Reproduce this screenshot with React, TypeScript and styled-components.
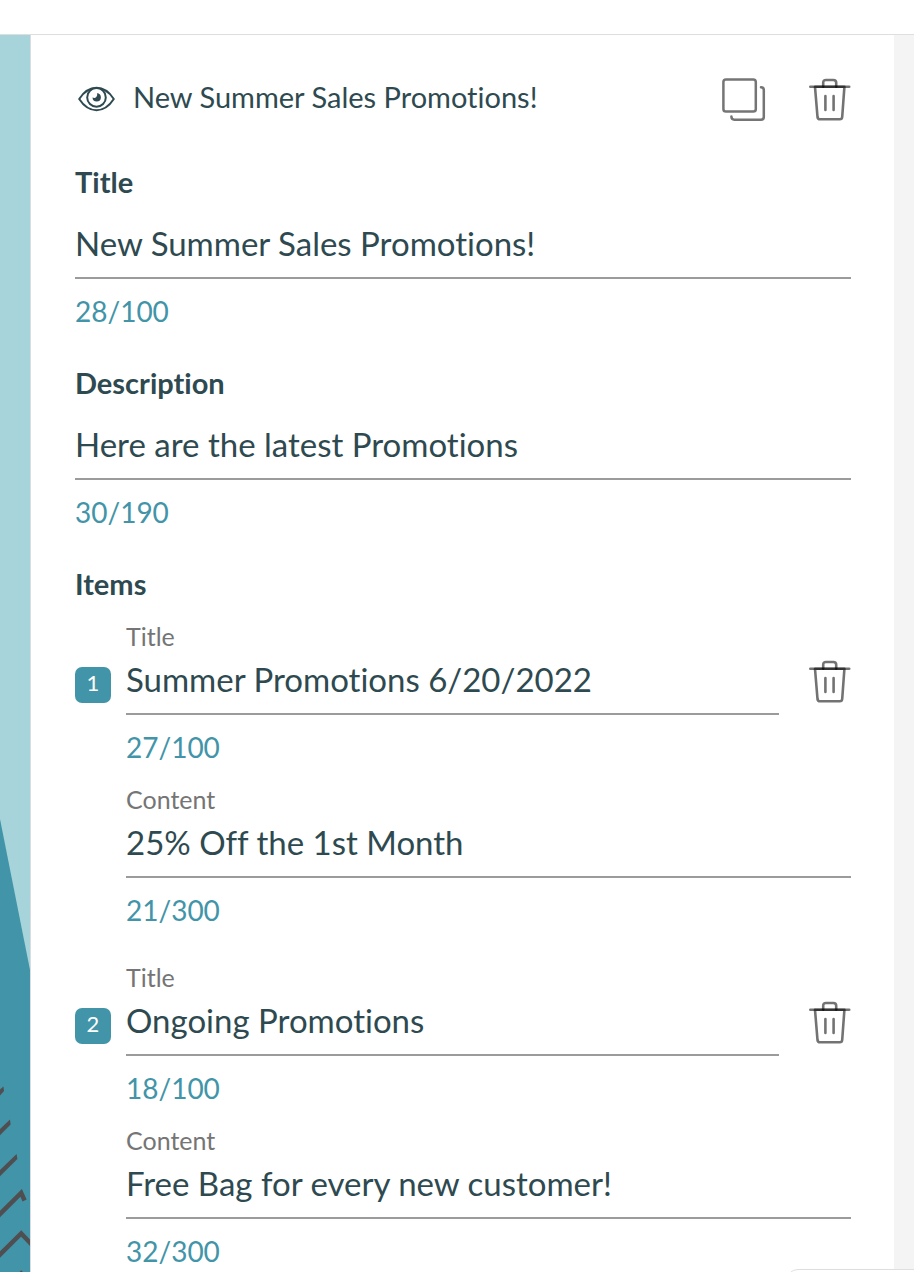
import React, { useId, useState } from "react";
import styled, { createGlobalStyle } from "styled-components";

const GlobalStyle = createGlobalStyle`
  * { box-sizing: border-box; }
  body {
    margin: 0;
    background: #fff;
    color: #2e4a50;
    font-family: "Lato", "Open Sans", sans-serif;
    font-variant-ligatures: no-common-ligatures;
  }
`;

const Page = styled.div`
  display: flex;
  flex-direction: column;
  min-height: 100vh;
`;

const TopBar = styled.header`
  height: 35px;
  border-bottom: 1px solid #dedede;
`;

const Workspace = styled.div`
  flex: 1;
  display: grid;
  grid-template-columns: 31px 1fr 20px;
`;

const Backdrop = styled.aside`
  position: relative;
  overflow: hidden;
  background: #a7d4da;
  border-right: 1px solid #dcdcdf;
`;

const Scenery = styled.svg`
  position: absolute;
  left: 0;
  bottom: 0;
  display: block;
`;

const Gutter = styled.div`
  background: #f4f4f4;
`;

const Editor = styled.main`
  padding: 43px 43px 0 44px;
`;

const CardHeader = styled.div`
  display: flex;
  align-items: center;
  height: 44px;
  margin-bottom: 43px;
`;

const CardName = styled.h1`
  flex: 1;
  display: flex;
  align-items: center;
  gap: 18px;
  margin: 0;
  padding: 0 0 6px 3px;
  font-size: 29px;
  font-weight: 400;
  line-height: 38px;

  svg {
    margin-top: 4px;
  }
`;

const Actions = styled.div`
  display: flex;
  gap: 43px;
`;

const IconButton = styled.button<{ $width?: number; $top?: number }>`
  flex: none;
  width: ${(p) => p.$width ?? 42}px;
  height: 44px;
  margin: ${(p) => p.$top ?? 0}px 0 0;
  padding: 0;
  border: 0;
  background: none;
  cursor: pointer;

  svg {
    display: block;
  }
`;

const Section = styled.section`
  display: flex;
  flex-direction: column;
  margin-bottom: 36px;
`;

const Heading = styled.label`
  margin-bottom: 16px;
  font-size: 29px;
  font-weight: 700;
  line-height: 34px;
`;

const ItemsHeading = styled.h2`
  margin: 0 0 20px;
  font-size: 29px;
  font-weight: 700;
  line-height: 34px;
`;

const SubLabel = styled.label`
  color: #757575;
  font-size: 25px;
  line-height: 30px;
`;

const TextBox = styled.input`
  width: 100%;
  height: 64px;
  padding: 0 0 6px;
  border: 0;
  border-bottom: 2px solid #9b9b9b;
  border-radius: 0;
  outline: 0;
  background: none;
  color: inherit;
  font: inherit;
  font-size: 33px;
  font-variant-ligatures: no-common-ligatures;
`;

const Counter = styled.output`
  display: block;
  margin-top: 13px;
  color: #4294a8;
  font-size: 28px;
  line-height: 38px;
`;

const ItemList = styled.ol`
  display: flex;
  flex-direction: column;
  gap: 33px;
  margin: 0;
  padding: 0;
  list-style: none;
`;

const ItemRow = styled.li`
  display: flex;
  gap: 15px;
`;

const Badge = styled.span`
  flex: none;
  width: 36px;
  height: 36px;
  margin-top: 46px;
  border-radius: 7px;
  background: #4294a8;
  color: #fff;
  font-size: 22px;
  line-height: 32px;
  text-align: center;
`;

const ItemBody = styled.div`
  flex: 1;
  display: flex;
  flex-direction: column;
  gap: 18px;
  min-width: 0;
`;

const TitleRow = styled.div`
  display: flex;
  gap: 30px;
`;

const ItemField = styled.div`
  flex: 1;
  display: flex;
  flex-direction: column;
  min-width: 0;
`;

const FloatingPanel = styled.div`
  position: fixed;
  right: -12px;
  bottom: -37px;
  width: 140px;
  height: 40px;
  border: 1px solid #dedede;
  border-radius: 12px;
  background: #fff;
`;

const TrashIcon = () => (
  <svg width="42" height="44" viewBox="0 0 42 44" fill="none" stroke="#000" strokeOpacity="0.55" strokeWidth="2.6" strokeLinecap="round" strokeLinejoin="round">
    <path d="M1.3 8.8H40.2" />
    <path d="M14.2 8.6V4.8Q14.2 2 17 2H24.4Q27.2 2 27.2 4.8V8.6" />
    <path d="M6 8.8H35.4L33.2 39Q33 41.3 30.8 41.3H11Q8.8 41.3 8.5 39Z" />
    <path d="M16.4 18V32" />
    <path d="M24.6 18V32" />
  </svg>
);

const CopyIcon = () => (
  <svg width="44" height="44" viewBox="0 0 44 44" fill="none" stroke="#757575" strokeWidth="2.5" strokeLinecap="round">
    <rect x="1.4" y="1.4" width="32.4" height="32.2" rx="2.6" />
    <path d="M39 9.2Q41.8 9.2 41.8 12V39Q41.8 41.7 39 41.7H12.4Q9.4 41.7 9.4 38.6" />
  </svg>
);

const EyeIcon = () => (
  <svg width="37" height="26" viewBox="0 0 37 26" fill="none" stroke="#2e4a50" strokeWidth="2">
    <path d="M1.2 13Q8.5 1.8 18.5 1.8T35.8 13Q28.5 24.2 18.5 24.2T1.2 13Z" strokeLinejoin="round" />
    <circle cx="18.5" cy="11.4" r="9.3" />
    <path d="M18.9 7.2A4.2 4.2 0 1 1 14.5 11.5A3.2 3.2 0 0 0 18.9 7.2Z" fill="#2e4a50" stroke="none" />
  </svg>
);

interface FieldProps {
  label: string;
  initial: string;
  limit: number;
}

function useField(initial: string) {
  const id = useId();
  const [value, setValue] = useState(initial);
  return { id, value, onChange: (e: React.ChangeEvent<HTMLInputElement>) => setValue(e.target.value) };
}

function SectionField({ label, initial, limit }: FieldProps) {
  const field = useField(initial);
  return (
    <Section>
      <Heading htmlFor={field.id}>{label}</Heading>
      <TextBox {...field} maxLength={limit} />
      <Counter htmlFor={field.id}>{`${field.value.length}/${limit}`}</Counter>
    </Section>
  );
}

function LabelledField({ label, initial, limit }: FieldProps) {
  const field = useField(initial);
  return (
    <ItemField>
      <SubLabel htmlFor={field.id}>{label}</SubLabel>
      <TextBox {...field} maxLength={limit} />
      <Counter htmlFor={field.id}>{`${field.value.length}/${limit}`}</Counter>
    </ItemField>
  );
}

const items = [
  { title: "Summer Promotions 6/20/2022", content: "25% Off the 1st Month" },
  { title: "Ongoing Promotions", content: "Free Bag for every new customer!" },
];

export default function App() {
  return (
    <>
      <GlobalStyle />
      <Page>
        <TopBar />
        <Workspace>
          <Backdrop>
            <Scenery width="30" height="456" viewBox="0 0 30 456" fill="none">
              <path d="M0 3L30 154V456H0Z" fill="#4294a8" />
              <g fill="#4f4f52">
                <path d="M0 273.5L3.4 270.5L4 275L0 279.5Z" />
                <path d="M0 313L10 303.5L10.6 308.5L0 319.2Z" />
                <path d="M0 354L16.6 338L17.4 343L0 360.2Z" />
              </g>
              <g stroke="#4f4f52" strokeWidth="4.5">
                <path d="M-4 402L21.2 377L24.6 384.5" />
                <path d="M-4 442.5L21.2 417.5L34 431" />
                <path d="M-4 482.5L21.2 457.5L34 471" />
              </g>
            </Scenery>
          </Backdrop>
          <Editor>
            <CardHeader>
              <CardName>
                <EyeIcon />
                New Summer Sales Promotions!
              </CardName>
              <Actions>
                <IconButton $width={44} aria-label="Duplicate"><CopyIcon /></IconButton>
                <IconButton aria-label="Delete"><TrashIcon /></IconButton>
              </Actions>
            </CardHeader>
            <SectionField label="Title" initial="New Summer Sales Promotions!" limit={100} />
            <SectionField label="Description" initial="Here are the latest Promotions" limit={190} />
            <ItemsHeading>Items</ItemsHeading>
            <ItemList>
              {items.map((item, i) => (
                <ItemRow key={item.title}>
                  <Badge>{i + 1}</Badge>
                  <ItemBody>
                    <TitleRow>
                      <LabelledField label="Title" initial={item.title} limit={100} />
                      <IconButton $top={39} aria-label="Delete item"><TrashIcon /></IconButton>
                    </TitleRow>
                    <LabelledField label="Content" initial={item.content} limit={300} />
                  </ItemBody>
                </ItemRow>
              ))}
            </ItemList>
          </Editor>
          <Gutter />
        </Workspace>
      </Page>
      <FloatingPanel />
    </>
  );
}
